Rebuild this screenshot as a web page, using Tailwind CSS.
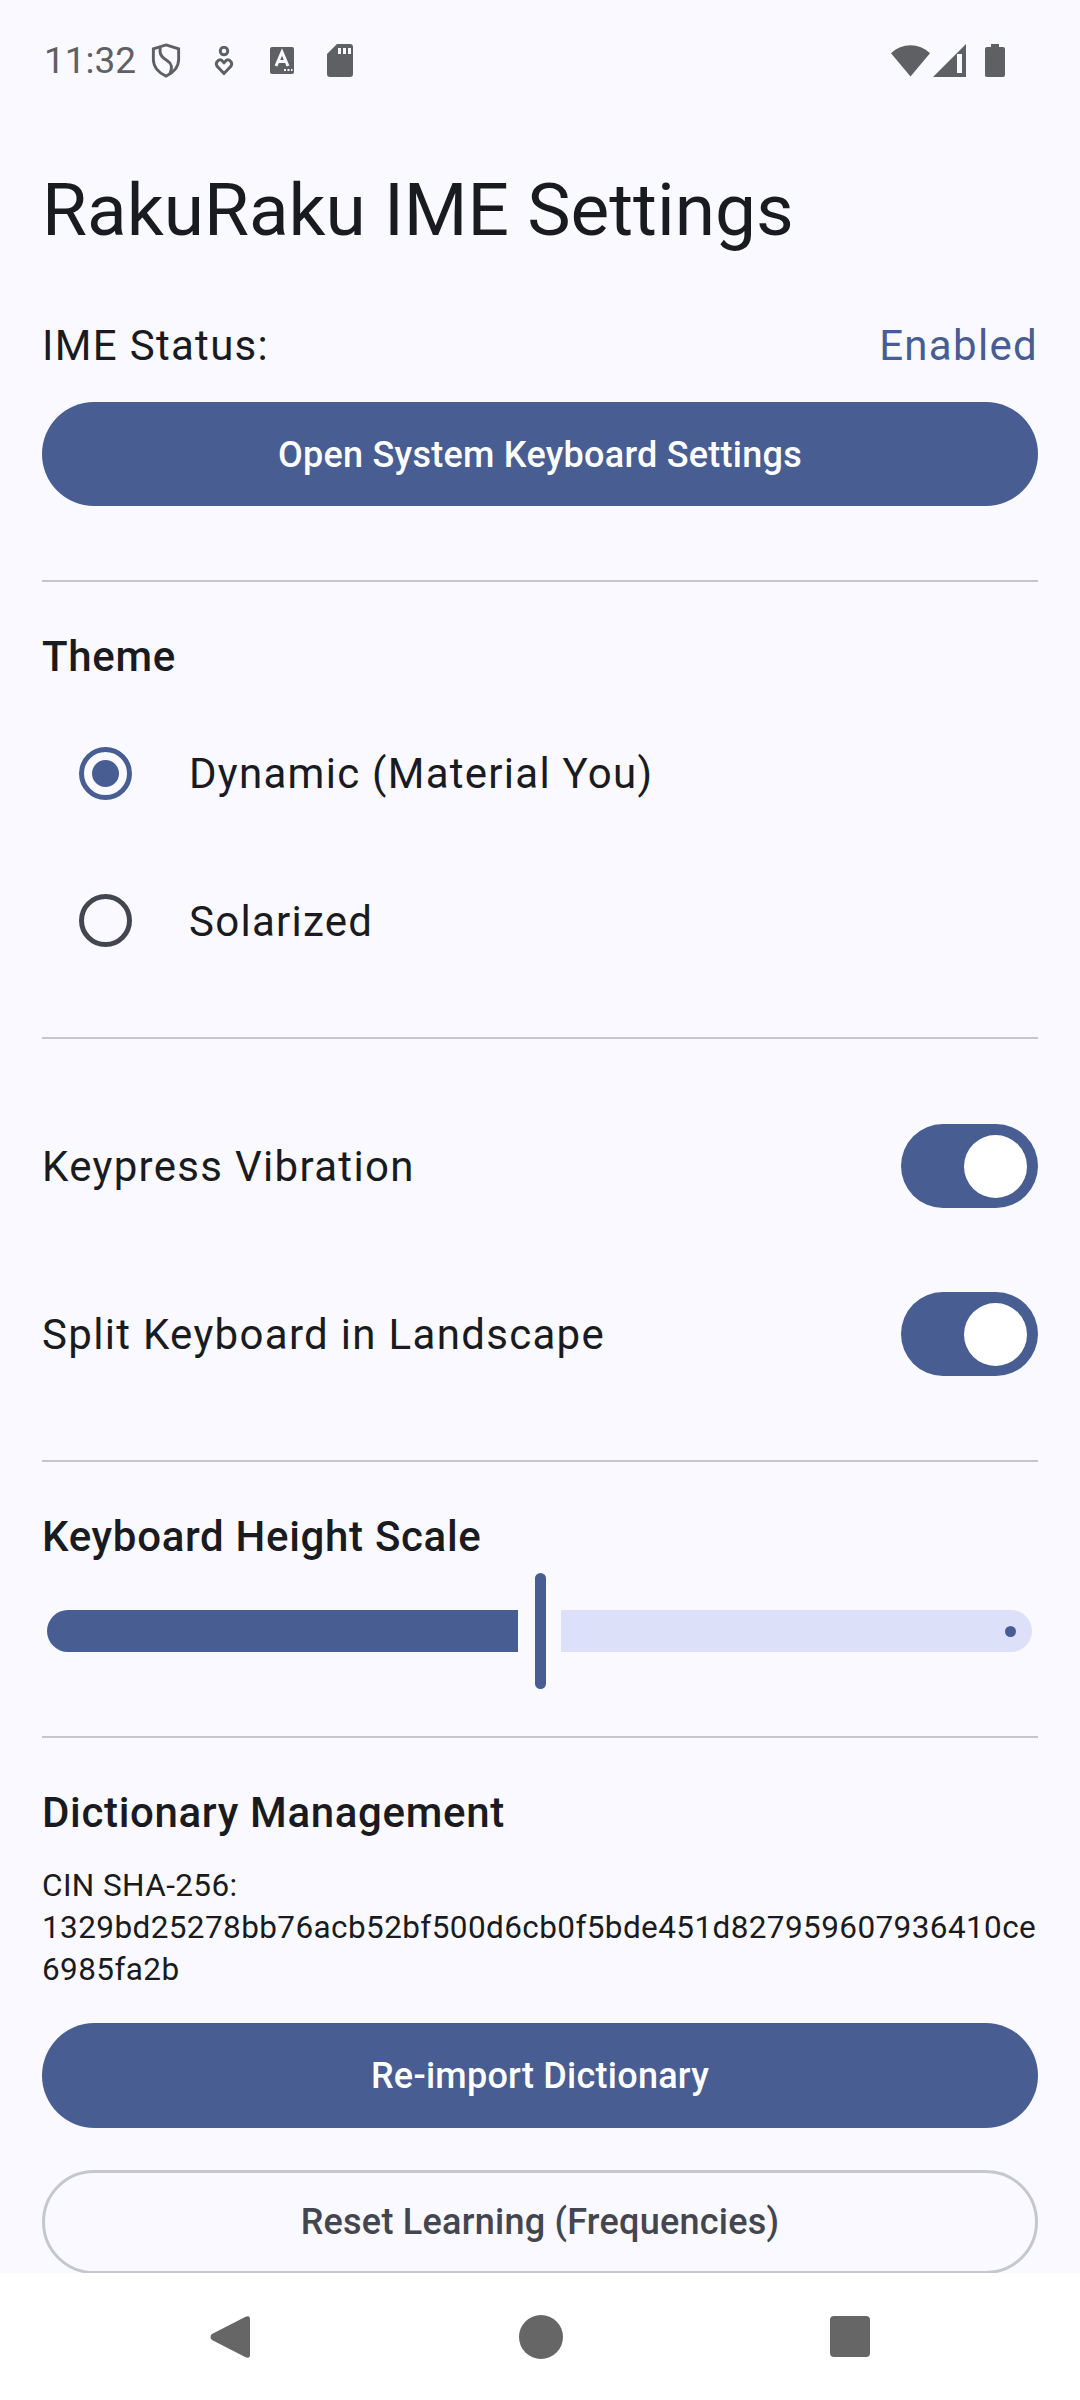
<!DOCTYPE html>
<html lang="en">
  <head>
    <meta charset="UTF-8" />
    <meta name="viewport" content="width=device-width, initial-scale=1.0" />
    <title>RakuRaku IME Settings</title>
    <script src="https://cdn.jsdelivr.net/npm/@tailwindcss/browser@4"></script>
  </head>
  <body class="bg-[#f9f9ff] text-[#1a1b20] font-[Roboto,sans-serif]">
    <div class="w-[1080px] h-[2400px] flex flex-col overflow-hidden">

      <!-- Status bar -->
      <header class="h-[121px] shrink-0 flex items-center justify-between pl-[44px] pr-[75px] text-[#5f6064]">
        <div class="flex items-center">
          <span class="text-[37px] leading-none w-[107px]">11:32</span>
          <svg class="w-[30px] h-[35px]" viewBox="0 0 30 36" fill="none" stroke="currentColor" stroke-width="3">
            <path d="M15 2 L28 6 V17 C28 25 22 31 15 34 C8 31 2 25 2 17 V6 Z" />
            <path d="M9 5 C8 12 11 15 16 18 C21 21 22 25 19 32" />
          </svg>
          <svg class="w-[22px] h-[30px] ml-[32px]" viewBox="0 0 22 36" fill="none" stroke="currentColor" stroke-width="3.500">
            <circle cx="11" cy="6" r="4.500" />
            <path d="M11 33 L2.500 24 C0 20 5 15 8 17 L11 20 L14 17 C17 15 22 20 19.500 24 Z" />
          </svg>
          <svg class="w-[24px] h-[27px] ml-[35px]" viewBox="0 0 24 27">
            <rect width="24" height="27" rx="2" fill="currentColor" />
            <path d="M6 19 L12 5 L18 19 M8.500 14.500 H15.500" fill="none" stroke="#f9f9ff" stroke-width="3" />
            <path d="M14 23 h2 M17.500 23 h2 M21 23 h1.500" stroke="#f9f9ff" stroke-width="2" />
          </svg>
          <svg class="w-[26px] h-[33px] ml-[33px]" viewBox="0 0 26 33">
            <path d="M10 0 H23 Q26 0 26 3 V30 Q26 33 23 33 H3 Q0 33 0 30 V10 Z" fill="currentColor" />
            <path d="M11 4 h3 v6 h-3 Z M16 4 h3 v6 h-3 Z M21 4 h3 v6 h-3 Z" fill="#f9f9ff" />
          </svg>
        </div>
        <div class="flex items-center">
          <svg class="w-[39px] h-[33px]" viewBox="0 0 40 33">
            <path d="M0 9 C11 -2 29 -2 40 9 L20 33 Z" fill="currentColor" />
          </svg>
          <svg class="w-[33px] h-[33px] ml-[3px]" viewBox="0 0 33 33">
            <path d="M33 0 V33 H0 Z" fill="currentColor" />
            <path d="M24 10 h5 v19 h-5 Z" fill="#f9f9ff" />
          </svg>
          <svg class="w-[20px] h-[33px] ml-[19px]" viewBox="0 0 20 33">
            <path d="M6 0 H14 V3 H18 Q20 3 20 5 V31 Q20 33 18 33 H2 Q0 33 0 31 V5 Q0 3 2 3 H6 Z" fill="currentColor" />
          </svg>
        </div>
      </header>

      <!-- Settings -->
      <main class="flex-1 min-h-0 overflow-hidden px-[42px]">
        <h1 class="mt-[40px] text-[73px] leading-[99px]">RakuRaku IME Settings</h1>

        <div class="mt-[53px] flex items-center justify-between text-[42px] leading-[66px] tracking-[1.312px]">
          <span>IME Status:</span>
          <span class="text-[#485d92]">Enabled</span>
        </div>
        <button class="mt-[23px] w-full h-[104px] pt-[2px] rounded-full bg-[#485d92] text-white text-[36px] font-medium tracking-[0.250px]">Open System Keyboard Settings</button>

        <hr class="mt-[74px] border-t-[2px] border-[#c5c6d0]" />

        <h2 class="mt-[42px] text-[42px] leading-[66px] font-medium tracking-[0.680px]">Theme</h2>
        <div class="mt-[10px]">
          <div class="h-[147px] flex items-center pl-[37px] text-[42px] tracking-[1.270px]">
            <span class="w-[53px] h-[53px] rounded-full border-[5px] border-[#485d92] flex items-center justify-center">
              <span class="w-[27px] h-[27px] rounded-full bg-[#485d92]"></span>
            </span>
            <span class="ml-[57px]">Dynamic (Material You)</span>
          </div>
          <div class="h-[147px] flex items-center pl-[37px] text-[42px] tracking-[1.270px]">
            <span class="w-[53px] h-[53px] rounded-full border-[5px] border-[#44464f]"></span>
            <span class="ml-[57px] pt-[1px]">Solarized</span>
          </div>
        </div>

        <hr class="mt-[43px] border-t-[2px] border-[#c5c6d0]" />

        <div class="mt-[43px]">
          <div class="h-[168px] flex items-center justify-between text-[42px] tracking-[1.312px]">
            <span>Keypress Vibration</span>
            <span class="w-[137px] h-[84px] rounded-full bg-[#485d92] flex items-center justify-end pr-[11px]">
              <span class="w-[63px] h-[63px] rounded-full bg-white"></span>
            </span>
          </div>
          <div class="h-[168px] flex items-center justify-between text-[42px] tracking-[1.312px]">
            <span>Split Keyboard in Landscape</span>
            <span class="w-[137px] h-[84px] rounded-full bg-[#485d92] flex items-center justify-end pr-[11px]">
              <span class="w-[63px] h-[63px] rounded-full bg-white"></span>
            </span>
          </div>
        </div>

        <hr class="mt-[42px] border-t-[2px] border-[#c5c6d0]" />

        <h2 class="mt-[42px] text-[42px] leading-[66px] font-medium tracking-[0.680px]">Keyboard Height Scale</h2>
        <div class="mt-[3px] h-[116px] flex items-center pl-[5px] pr-[6px]">
          <span class="w-[471px] h-[42px] bg-[#485d92] rounded-l-full rounded-r-[5px]"></span>
          <span class="ml-[17px] w-[11px] h-[116px] rounded-full bg-[#485d92]"></span>
          <span class="ml-[15px] flex-1 h-[42px] bg-[#dce1f9] rounded-r-full rounded-l-[5px] flex items-center justify-end pr-[16px]">
            <span class="w-[11px] h-[11px] rounded-full bg-[#485d92]"></span>
          </span>
        </div>

        <hr class="mt-[47px] border-t-[2px] border-[#c5c6d0]" />

        <h2 class="mt-[42px] text-[42px] leading-[66px] font-medium tracking-[0.660px]">Dictionary Management</h2>
        <p class="mt-[19px] text-[31.500px] leading-[42px] tracking-[0.400px]">CIN SHA-256:<br />1329bd25278bb76acb52bf500d6cb0f5bde451d827959607936410ce<br />6985fa2b</p>
        <button class="mt-[32px] w-full h-[105px] rounded-full bg-[#485d92] text-white text-[36px] font-medium tracking-[0.250px]">Re-import Dictionary</button>
        <button class="mt-[42px] w-full h-[104px] rounded-full border-[3px] border-[#c5c6d0] text-[#44464f] text-[36px] font-medium tracking-[0.250px]">Reset Learning (Frequencies)</button>
      </main>

      <!-- Navigation bar -->
      <nav class="h-[127px] shrink-0 bg-white text-[#666666] flex items-center">
        <div class="w-[1080px] flex items-center justify-center">
          <svg class="w-[40px] h-[44px] mr-[269px]" viewBox="0 0 41 44">
            <path d="M36 1.500 Q41 -1 41 4 V40 Q41 45 36 42.500 L2 25 Q-1 22 2 19 Z" fill="currentColor" />
          </svg>
          <span class="w-[44px] h-[44px] rounded-full bg-[#666666]"></span>
          <span class="ml-[267px] w-[40px] h-[41px] rounded-[4px] bg-[#666666]"></span>
        </div>
      </nav>
    </div>
  </body>
</html>
